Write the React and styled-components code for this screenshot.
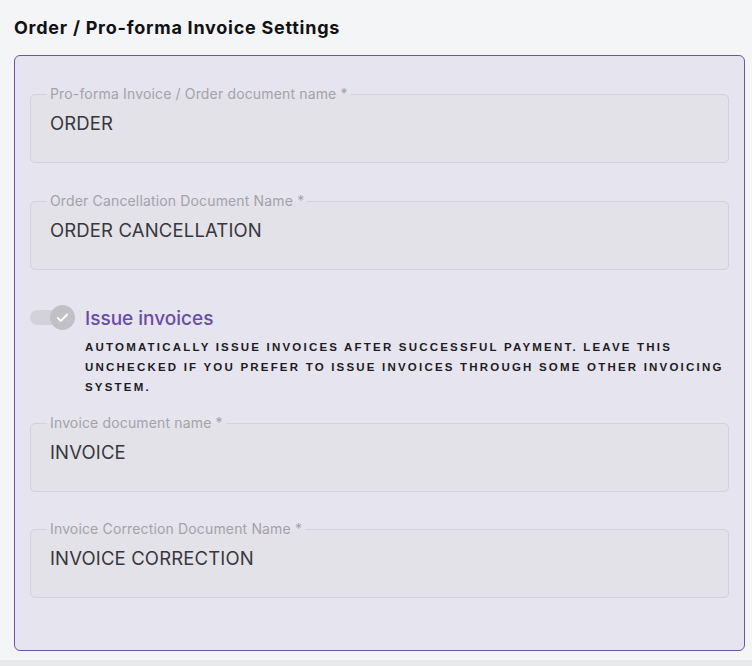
import React from "react";
import styled, { createGlobalStyle } from "styled-components";

const Global = createGlobalStyle`
  html, body { margin: 0; padding: 0; background: #f4f5f7; }
  body { font-family: Inter, "Noto Sans", sans-serif; }
`;

const Page = styled.div`
  min-height: 666px;
  display: flex;
  flex-direction: column;
  padding: 16px 7px 0 14px;
  box-sizing: border-box;
`;

const Title = styled.h2`
  margin: 0 0 15px;
  font-size: 18px;
  line-height: 24px;
  font-weight: 700;
  color: #111114;
  letter-spacing: 0.75px;
`;

const Panel = styled.section`
  border: 1px solid #6e51ad;
  border-radius: 6px;
  background: #e6e4ef;
  padding: 30px 15px 52px;
  display: flex;
  flex-direction: column;
`;

const Field = styled.fieldset`
  margin: 0 0 ${(p) => p.$gap ?? 30}px;
  padding: 0 16px 27px;
  border: 1px solid #d3d0df;
  border-radius: 5px;
  background: #e3e2e8;
  min-width: 0;
`;

const Legend = styled.legend`
  padding: 0 3px;
  font-size: 14px;
  line-height: 16px;
  letter-spacing: 0.15px;
  color: #a3a2aa;
`;

const Value = styled.div`
  margin-top: 9px;
  padding-left: 3px;
  font-size: 18.5px;
  line-height: 24px;
  letter-spacing: 0.15px;
  color: #38373d;
`;

const ToggleSection = styled.div`
  display: grid;
  grid-template-columns: 45px 1fr;
  column-gap: 10px;
  margin: 36px 0 18px;
`;

const Toggle = styled.div`
  position: relative;
  width: 45px;
  height: 25px;
  margin-top: -1px;
`;

const Track = styled.span`
  position: absolute;
  left: 0;
  top: 5px;
  width: 40px;
  height: 15px;
  border-radius: 8px;
  background: #d3d1da;
`;

const Thumb = styled.span`
  position: absolute;
  right: 0;
  top: 0;
  width: 25px;
  height: 25px;
  border-radius: 50%;
  background: #c1c0c6;
  display: flex;
  align-items: center;
  justify-content: center;
`;

const ToggleText = styled.div`
  display: flex;
  flex-direction: column;
`;

const ToggleTitle = styled.div`
  font-size: 19px;
  line-height: 26px;
  font-weight: 500;
  color: #6a4ca6;
`;

const Description = styled.p`
  margin: 5px 0 0;
  font-family: "Liberation Sans", Arial, sans-serif;
  font-size: 11.5px;
  line-height: 20px;
  font-weight: 700;
  letter-spacing: 2.2px;
  text-transform: uppercase;
  color: #1c1c24;
`;

const Strip = styled.div`
  margin: 9px -7px 0 -14px;
  flex: 1;
  background: #e8e9eb;
`;

function TextField({ label, value, gap }) {
  return (
    <Field $gap={gap}>
      <Legend>{label}</Legend>
      <Value>{value}</Value>
    </Field>
  );
}

export default function App() {
  return (
    <>
      <Global />
      <Page>
        <Title>Order / Pro-forma Invoice Settings</Title>
        <Panel>
          <TextField label="Pro-forma Invoice / Order document name *" value="ORDER" gap={30} />
          <TextField label="Order Cancellation Document Name *" value="ORDER CANCELLATION" gap={0} />
          <ToggleSection>
            <Toggle>
              <Track />
              <Thumb>
                <svg width="15" height="15" viewBox="0 0 16 16" fill="none">
                  <path d="M3 8.5l3.3 3.2L13 4.8" stroke="#fff" strokeWidth="2" strokeLinecap="round" strokeLinejoin="round" />
                </svg>
              </Thumb>
            </Toggle>
            <ToggleText>
              <ToggleTitle>Issue invoices</ToggleTitle>
              <Description>
                Automatically issue invoices after successful payment. Leave this unchecked if you prefer to issue invoices through some other invoicing system.
              </Description>
            </ToggleText>
          </ToggleSection>
          <TextField label="Invoice document name *" value="INVOICE" gap={29} />
          <TextField label="Invoice Correction Document Name *" value="INVOICE CORRECTION" gap={0} />
        </Panel>
        <Strip />
      </Page>
    </>
  );
}
